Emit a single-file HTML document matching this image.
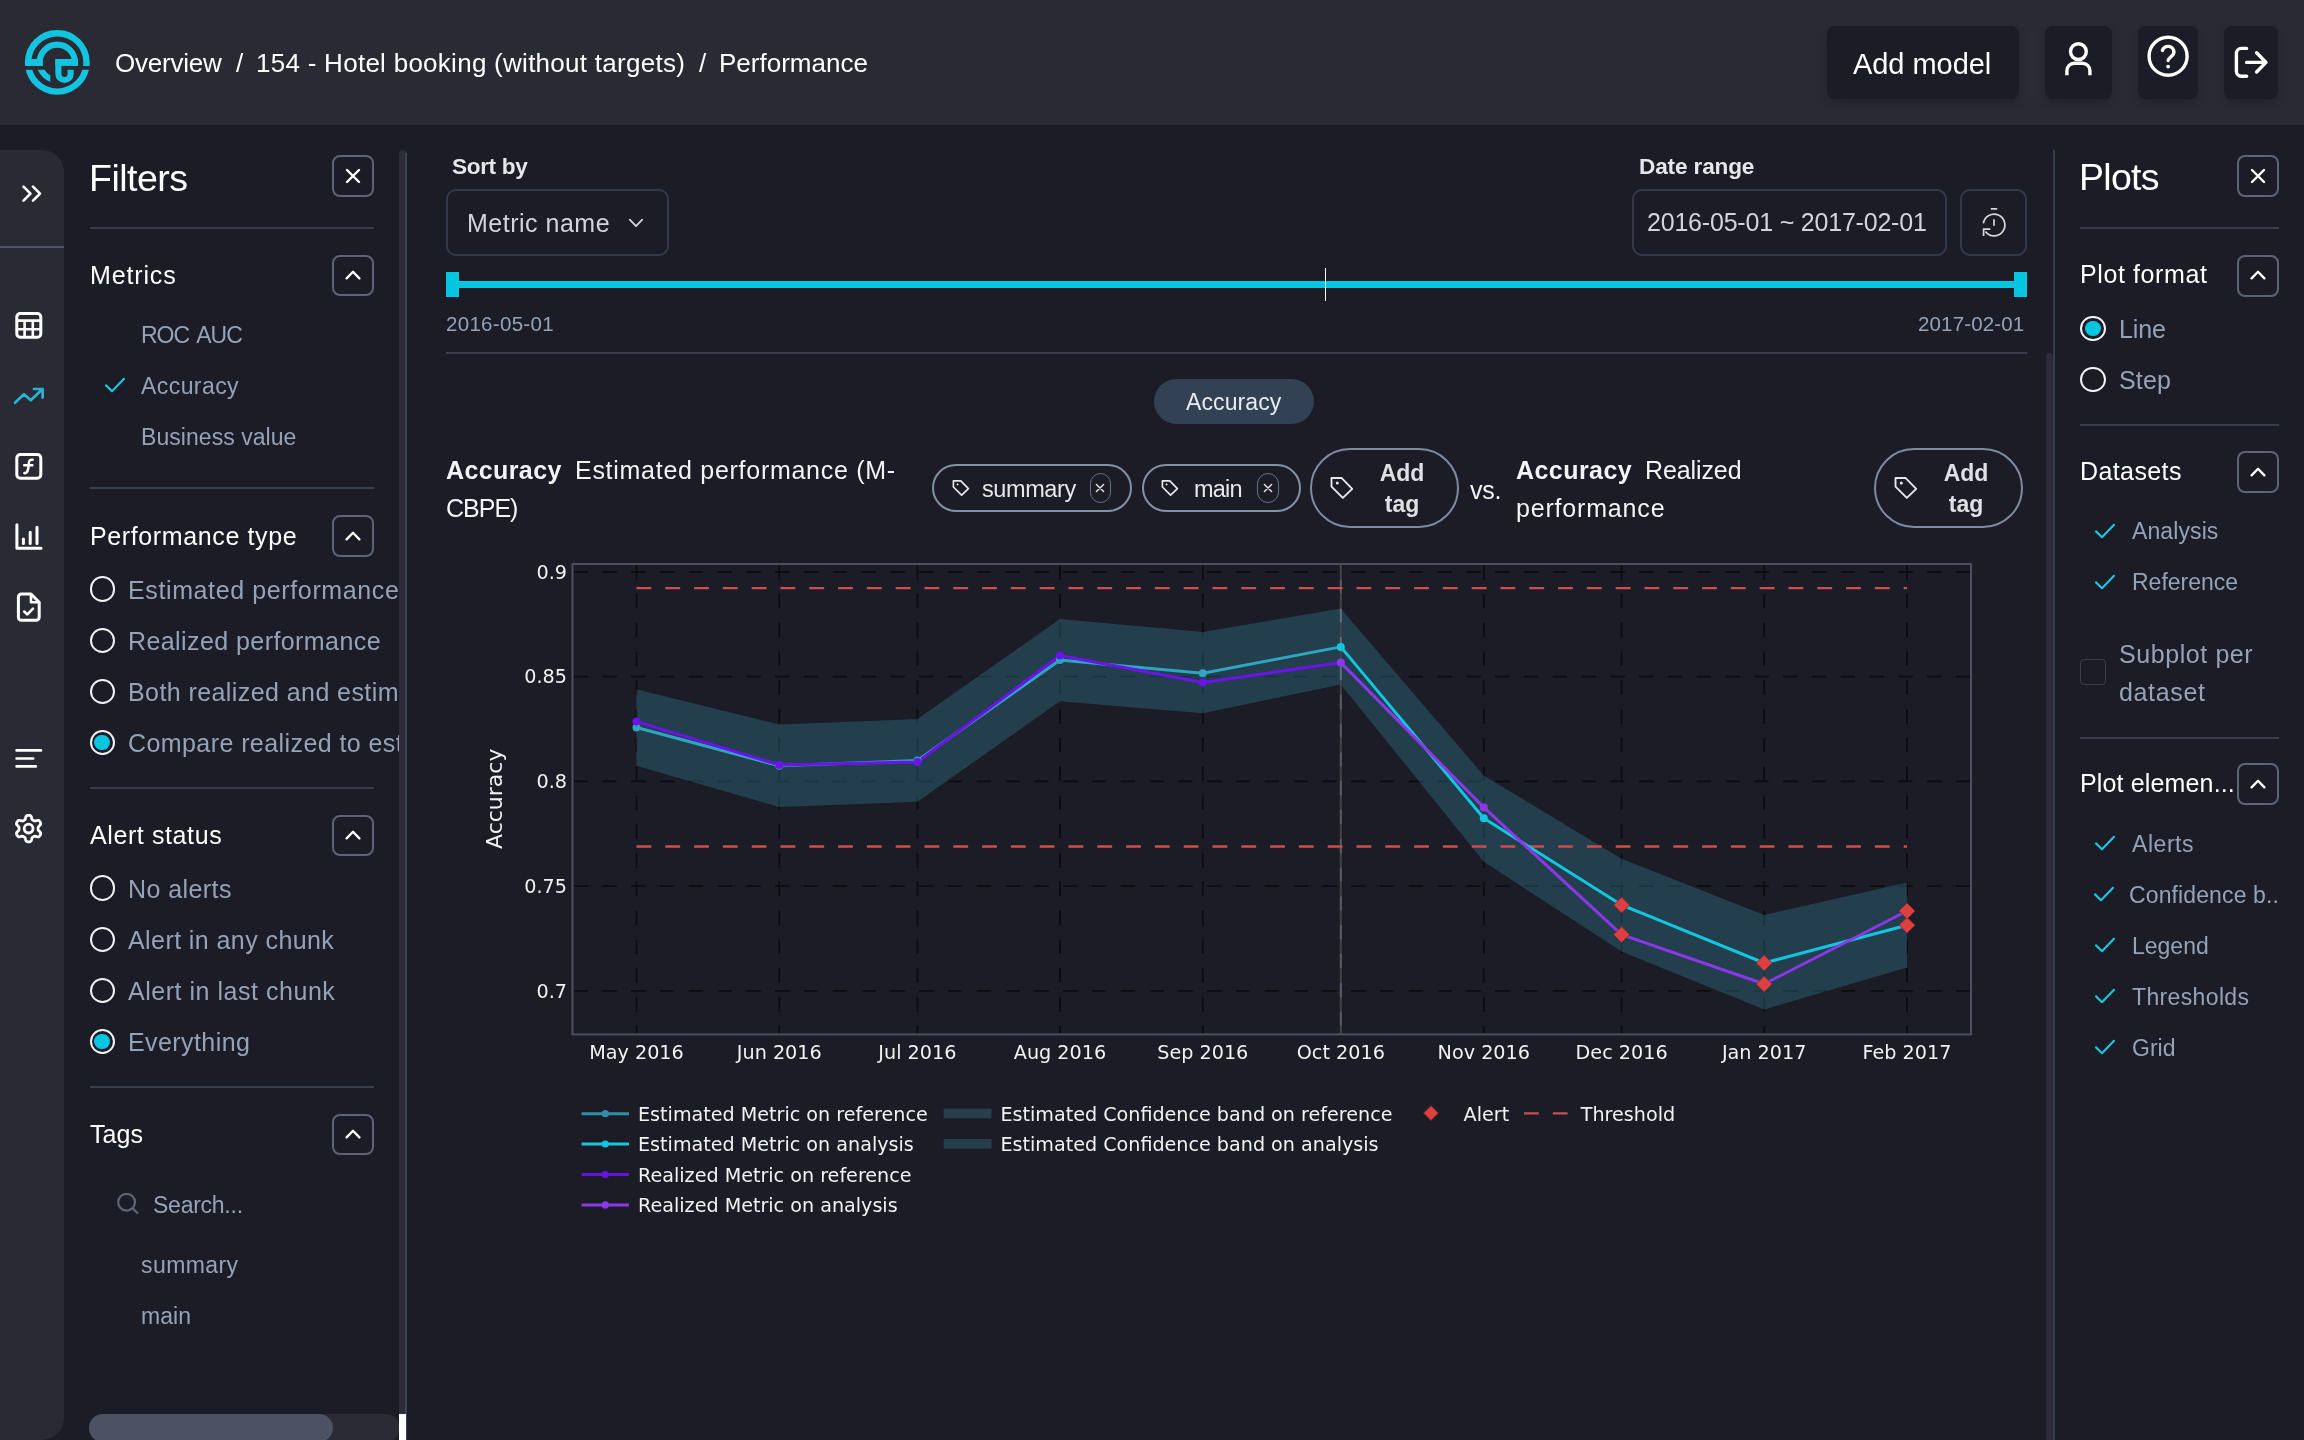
<!DOCTYPE html>
<html lang="en">
<head>
<meta charset="utf-8">
<title>Performance - 154 - Hotel booking (without targets)</title>
<style>
*{box-sizing:border-box;margin:0;padding:0}
html,body{width:2304px;height:1440px;overflow:hidden;background:#1c1c26}
body{position:relative;font-family:"Liberation Sans",Arial,sans-serif;color:#fff;-webkit-font-smoothing:antialiased}
.abs{position:absolute}
.t{position:absolute;white-space:nowrap;will-change:transform;line-height:40px;height:40px;margin-top:-20px}
svg{position:absolute;overflow:visible;will-change:transform}
.ico{fill:none;stroke:#fff;stroke-width:2;stroke-linecap:round;stroke-linejoin:round}
/* header */
#hdr{left:0;top:0;width:2304px;height:125px;background:#2a2a35}
.hbtn{position:absolute;top:26px;height:73px;background:#1c1c26;border-radius:8px;box-shadow:0 4px 8px rgba(0,0,0,.18)}
/* left nav */
#nav{left:0;top:150px;width:64px;height:1290px;background:#2a2a35;border-radius:0 22px 22px 0}
/* panels */
.sqb{position:absolute;width:41.8px;height:41.8px;border:2px solid #5b6577;border-radius:8px}
.hr{position:absolute;height:2px;background:#363f50}
.sec{font-size:25px;color:#fff;margin-top:-19.3px}
.it{font-size:23px;color:#94a3b8;margin-top:-18.7px}
.rl{font-size:25px;color:#94a3b8;letter-spacing:.42px;margin-top:-19.2px}
.radio{position:absolute;width:25.6px;height:25.6px;border:2px solid #f1f3f6;border-radius:50%}
.radio.on::after{content:"";position:absolute;left:2.9px;top:2.9px;width:15.8px;height:15.8px;border-radius:50%;background:#06c5e1}
.chk{stroke:#1fc3dc;stroke-width:2.2;fill:none;stroke-linecap:round;stroke-linejoin:round}
</style>
</head>
<body>

<!-- ================= HEADER ================= -->
<div id="hdr" class="abs">
  <svg style="left:17px;top:22px" width="80" height="80" viewBox="0 0 80 80">
    <defs>
      <clipPath id="lgU"><rect x="0" y="0" width="80" height="43.9"/></clipPath>
      <clipPath id="lgL"><rect x="0" y="47.8" width="80" height="40"/></clipPath>
      <clipPath id="lgS"><rect x="0" y="47.8" width="33.3" height="40"/></clipPath>
    </defs>
    <g fill="none" stroke="#12c4e0">
      <circle cx="40.3" cy="40.4" r="29.2" stroke-width="6.4" clip-path="url(#lgU)"/>
      <circle cx="40.3" cy="40.4" r="29.2" stroke-width="6.4" clip-path="url(#lgL)"/>
      <circle cx="40.3" cy="40.4" r="17.7" stroke-width="6.2" clip-path="url(#lgU)"/>
      <circle cx="40.3" cy="40.4" r="17.7" stroke-width="6.2" clip-path="url(#lgS)"/>
      <path d="M41.4 37 V51.9 A6.1 6.1 0 0 0 53.6 51.9 V47.8" stroke-width="6.1"/>
    </g>
    <rect x="8.6" y="37" width="17" height="6.9" fill="#12c4e0"/>
    <rect x="38.35" y="37" width="22.5" height="6.9" fill="#12c4e0"/>
  </svg>
  <div class="t" style="left:114.6px;top:63.4px;font-size:26px;letter-spacing:-0.22px" id="bc0">Overview</div>
  <div class="t" style="left:235.6px;top:63.4px;font-size:26px">/</div>
  <div class="t" style="left:256px;top:63.4px;font-size:26px;letter-spacing:0.27px" id="bc1">154 - Hotel booking (without targets)</div>
  <div class="t" style="left:699.4px;top:63.4px;font-size:26px">/</div>
  <div class="t" style="left:718.6px;top:63.4px;font-size:26px;letter-spacing:0.00px" id="bc2">Performance</div>

  <div class="hbtn" style="left:1827px;width:192px"></div>
  <div class="t" style="left:1853px;top:63.6px;font-size:29px;letter-spacing:-0.05px" id="tAddm">Add model</div>
  <div class="hbtn" style="left:2045px;width:67px"></div>
  <div class="hbtn" style="left:2138px;width:60px"></div>
  <div class="hbtn" style="left:2224px;width:54px"></div>
  <!-- user -->
  <svg class="ico" style="left:0;top:0;stroke-width:3.4" width="2304" height="125" viewBox="0 0 2304 125"><circle cx="2078.4" cy="51.6" r="7.9"/><path d="M2066.9 75.2V70.6A7.4 7.4 0 0 1 2074.3 63.2H2082.5A7.4 7.4 0 0 1 2089.9 70.6V75.2" stroke-linecap="butt"/><circle cx="2168.1" cy="56.2" r="19"/><path d="M2162.4 50.4A5.9 5.9 0 0 1 2173.9 52.2C2173.9 56.2 2168.1 57.6 2168.1 60.6"/><circle cx="2168.1" cy="66.6" r="1.2" fill="#fff" stroke-width="1.4"/><path d="M2246.6 48.4H2241.4A5 5 0 0 0 2236.4 53.4V71.2A5 5 0 0 0 2241.4 76.2H2246.6"/><path d="M2246.6 62.4H2265.4M2256.6 52.8 2266 62.4 2256.6 72"/></svg>
</div>

<!-- ================= LEFT NAV ================= -->
<div id="nav" class="abs"></div>
<div class="abs" style="left:0;top:246px;width:64px;height:2px;background:#4d5568"></div>


<svg class="ico" style="left:0;top:0;stroke-width:2.6" width="64" height="1440" viewBox="0 0 64 1440">
  <path d="M23.5 186.6 30.5 193.6 23.5 200.6M33 186.6 40 193.6 33 200.6"/>
  <!-- table -->
  <g stroke-width="3">
    <rect x="16.8" y="313.6" width="24" height="23.6" rx="3.5"/>
    <path d="M17 320.6H40.6M17 329.2H40.6M24.6 320.6V337M32.8 320.6V337" stroke-width="2.6"/>
  </g>
  <!-- trend -->
  <path d="M15 402.8 24 394.2 30.8 400.3 42.3 389.2M34 389H42.6V397.6" stroke="#2bb3d0" stroke-width="2.7"/>
  <!-- function -->
  <g stroke-width="3">
    <rect x="16.8" y="454.6" width="24" height="23.6" rx="3.5"/>
    <path d="M32.6 459.8C27.6 458.6 29.2 465.4 28.2 468.6 27.4 472 26.4 473.6 24.4 473M24.2 465.2H32.4" stroke-width="2.5"/>
  </g>
  <!-- bar chart -->
  <path d="M16.9 524.8V548.2H41M23.4 539V543.6M30.2 532.2V543.6M37 527.2V543.6" stroke-width="3"/>
  <!-- file check -->
  <g stroke-width="3">
    <path d="M31 594H21.4A3 3 0 0 0 18.4 597V617.2A3 3 0 0 0 21.4 620.2H36.2A3 3 0 0 0 39.2 617.2V602.2Z"/>
    <path d="M31 594.4V602.2H39" stroke-width="2.6"/>
    <path d="M24.2 611.6 27.4 614.4 33 608.6" stroke-width="2.6"/>
  </g>
  <!-- lines -->
  <path d="M16.6 750.4H41M16.6 758.5H33.2M16.6 766.4H35.8" stroke-width="2.7"/>
  <!-- gear -->
  <g stroke-width="2.8">
    <circle cx="28.6" cy="828.6" r="4.4"/>
    <path d="M38.1 828.6 38.1 829.0 38.1 829.4 38.2 829.9 38.4 830.3 38.9 830.9 39.6 831.6 40.3 832.3 40.7 833.0 40.7 833.6 40.6 834.2 40.4 834.7 40.1 835.2 39.8 835.7 39.4 836.2 39.0 836.6 38.4 836.9 37.6 836.9 36.7 836.7 35.7 836.4 35.0 836.2 34.5 836.3 34.1 836.4 33.7 836.6 33.4 836.8 33.0 837.0 32.6 837.3 32.3 837.5 32.0 838.0 31.8 838.6 31.6 839.6 31.3 840.6 30.8 841.2 30.3 841.6 29.8 841.8 29.2 841.9 28.6 841.9 28.0 841.9 27.4 841.8 26.9 841.6 26.4 841.2 25.9 840.6 25.6 839.6 25.4 838.6 25.2 838.0 24.9 837.5 24.6 837.3 24.2 837.0 23.9 836.8 23.5 836.6 23.1 836.4 22.7 836.3 22.2 836.2 21.5 836.4 20.5 836.7 19.6 836.9 18.8 836.9 18.2 836.6 17.8 836.2 17.4 835.7 17.1 835.2 16.8 834.7 16.6 834.2 16.5 833.6 16.5 833.0 16.9 832.3 17.6 831.6 18.3 830.9 18.8 830.3 19.0 829.9 19.1 829.4 19.1 829.0 19.1 828.6 19.1 828.2 19.1 827.8 19.0 827.3 18.8 826.9 18.3 826.3 17.6 825.6 16.9 824.9 16.5 824.2 16.5 823.6 16.6 823.0 16.8 822.5 17.1 822.0 17.4 821.5 17.8 821.0 18.2 820.6 18.8 820.3 19.6 820.3 20.5 820.5 21.5 820.8 22.2 821.0 22.7 820.9 23.1 820.8 23.5 820.6 23.8 820.4 24.2 820.2 24.6 819.9 24.9 819.7 25.2 819.2 25.4 818.6 25.6 817.6 25.9 816.6 26.4 816.0 26.9 815.6 27.4 815.4 28.0 815.3 28.6 815.3 29.2 815.3 29.8 815.4 30.3 815.6 30.8 816.0 31.3 816.6 31.6 817.6 31.8 818.6 32.0 819.2 32.3 819.7 32.6 819.9 33.0 820.2 33.3 820.4 33.7 820.6 34.1 820.8 34.5 820.9 35.0 821.0 35.7 820.8 36.7 820.5 37.6 820.3 38.4 820.3 39.0 820.6 39.4 821.0 39.8 821.5 40.1 822.0 40.4 822.5 40.6 823.0 40.7 823.6 40.7 824.2 40.3 824.9 39.6 825.6 38.9 826.3 38.4 826.9 38.2 827.3 38.1 827.8 38.1 828.2Z"/>
  </g>
</svg>


<!-- ================= FILTERS PANEL ================= -->
<div class="abs" style="left:64px;top:150px;width:335px;height:1290px;overflow:hidden" id="fpan">
<div class="abs" style="left:-64px;top:-150px;width:600px;height:1440px">
<div class="t" style="left:89px;top:178px;font-size:37.5px;line-height:50px;height:50px;margin-top:-25px;letter-spacing:-0.50px" id="tFilters">Filters</div>
<div class="sqb" style="left:332.1px;top:155.2px"></div><svg class="ico" style="left:352.8px;top:175.5px" width="1" height="1"><path d="M-6 -6 6 6M6 -6-6 6" stroke-width="2.4"/></svg>

<div class="hr" style="left:90px;top:227px;width:284px"></div>
<div class="t sec" style="left:90px;top:274px;letter-spacing:0.85px" id="tMetrics">Metrics</div>
<div class="sqb" style="left:332.1px;top:254.7px"></div><svg class="ico" style="left:352.8px;top:275.3px" width="1" height="1"><path d="M-6.4 3.4 0 -3.2 6.4 3.4" stroke-width="2.3"/></svg>

<div class="t it" style="left:141px;top:334px;word-spacing:3px;letter-spacing:-1.00px" id="m0">ROC AUC</div>
<div class="t it" style="left:141px;top:385px;letter-spacing:0.43px" id="m1">Accuracy</div>
<svg style="left:115px;top:385px" width="1" height="1"><path class="chk" d="M-9 0.4 -3 6.2 9 -6.2"/></svg>

<div class="t it" style="left:141px;top:436px;letter-spacing:0.05px" id="m2">Business value</div>
<div class="hr" style="left:90px;top:487px;width:284px"></div>
<div class="t sec" style="left:90px;top:535px;letter-spacing:0.62px" id="tPerf">Performance type</div>
<div class="sqb" style="left:332.1px;top:515.4px"></div><svg class="ico" style="left:352.8px;top:536.0px" width="1" height="1"><path d="M-6.4 3.4 0 -3.2 6.4 3.4" stroke-width="2.3"/></svg>

<div class="radio" style="left:89.6px;top:576.4px"></div>

<div class="t rl" style="left:128px;top:589.0px;letter-spacing:0.62px" id="p0">Estimated performance</div>
<div class="radio" style="left:89.6px;top:627.5px"></div>

<div class="t rl" style="left:128px;top:640.1px" id="p1">Realized performance</div>
<div class="radio" style="left:89.6px;top:678.6px"></div>

<div class="t rl" style="left:128px;top:691.2px" id="p2">Both realized and estimated</div>
<div class="radio on" style="left:89.6px;top:729.7px"></div>

<div class="t rl" style="left:128px;top:742.3px" id="p3">Compare realized to estimated</div>
<div class="hr" style="left:90px;top:787px;width:284px"></div>
<div class="t sec" style="left:90px;top:834px;letter-spacing:0.60px" id="tAlert">Alert status</div>
<div class="sqb" style="left:332.1px;top:814.7px"></div><svg class="ico" style="left:352.8px;top:835.3px" width="1" height="1"><path d="M-6.4 3.4 0 -3.2 6.4 3.4" stroke-width="2.3"/></svg>

<div class="radio" style="left:89.6px;top:875.4px"></div>

<div class="t rl" style="left:128px;top:888.0px" id="a0">No alerts</div>
<div class="radio" style="left:89.6px;top:926.5px"></div>

<div class="t rl" style="left:128px;top:939.1px" id="a1">Alert in any chunk</div>
<div class="radio" style="left:89.6px;top:977.6px"></div>

<div class="t rl" style="left:128px;top:990.2px;letter-spacing:0.53px" id="a2">Alert in last chunk</div>
<div class="radio on" style="left:89.6px;top:1028.7px"></div>

<div class="t rl" style="left:128px;top:1041.3px" id="a3">Everything</div>
<div class="hr" style="left:90px;top:1086px;width:284px"></div>
<div class="t sec" style="left:90px;top:1133px;letter-spacing:0.05px" id="tTags">Tags</div>
<div class="sqb" style="left:332.1px;top:1113.7px"></div><svg class="ico" style="left:352.8px;top:1134.3px" width="1" height="1"><path d="M-6.4 3.4 0 -3.2 6.4 3.4" stroke-width="2.3"/></svg>

<svg style="left:116px;top:1192px" width="24" height="24" viewBox="0 0 24 24" fill="none" stroke="#5b6575" stroke-width="2.2" stroke-linecap="round"><circle cx="10.6" cy="10.2" r="8.4"/><path d="M17 16.6 21.4 21"/></svg>
<div class="t it" style="left:153px;top:1204px;font-size:23px;letter-spacing:-0.25px" id="tSearch">Search...</div>
<div class="t it" style="left:141px;top:1264px;letter-spacing:0.42px" id="g0">summary</div>
<div class="t it" style="left:141px;top:1315px;letter-spacing:0.08px" id="g1">main</div>
<div class="abs" style="left:89px;top:1414px;width:311px;height:28px;border-radius:14px;background:#2a2b35"></div>
<div class="abs" style="left:89px;top:1414px;width:244px;height:28px;border-radius:14px;background:#4b5263"></div>
</div></div>
<div class="abs" style="left:399px;top:150px;width:7.5px;height:1290px;background:#2b2c36;border-radius:4px 4px 0 0"></div>
<div class="abs" style="left:405.4px;top:153px;width:1.2px;height:1290px;background:#394354"></div>
<div class="abs" style="left:399px;top:1414px;width:7px;height:26px;background:#fff"></div>

<!-- ================= MAIN ================= -->
<div class="t" style="left:452.4px;top:167.4px;font-size:22.6px;font-weight:bold;color:#e5e7eb;letter-spacing:-0.35px" id="tSort">Sort by</div>
<div class="abs" style="left:446px;top:189px;width:223px;height:67px;border:2px solid #313a4a;border-radius:10px"></div>
<div class="t" style="left:467px;top:223px;font-size:25px;color:#d1d5db;letter-spacing:0.50px" id="tMname">Metric name</div>
<svg style="left:635.6px;top:222.6px" width="1" height="1"><path d="M-6.2 -3.4 0 3.2 6.2 -3.4" fill="none" stroke="#d1d5db" stroke-width="1.8" stroke-linecap="round" stroke-linejoin="round"/></svg>
<div class="t" style="left:1638.6px;top:167.4px;font-size:22.6px;font-weight:bold;color:#e5e7eb;letter-spacing:-0.15px" id="tDate">Date range</div>
<div class="abs" style="left:1632px;top:189px;width:315px;height:67px;border:2px solid #313a4a;border-radius:10px"></div>
<div class="t" style="left:1647px;top:222.4px;font-size:25px;color:#d1d5db;letter-spacing:-0.20px" id="tRange">2016-05-01 ~ 2017-02-01</div>
<div class="abs" style="left:1960px;top:189px;width:67px;height:67px;border:2px solid #313a4a;border-radius:10px"></div>
<svg style="left:1993.5px;top:225.1px" width="1" height="1"><g fill="none" stroke="#d6d6d6" stroke-width="1.7"><path d="M-10.6 -1.6A10.8 10.8 0 1 1 -8.6 6.4"/><path d="M-3.6 4.2H-10.4V11"/><path d="M0 -5.8V0.8M-3.2 -16.1H3.2"/></g></svg>
<div class="abs" style="left:446px;top:281px;width:1581px;height:7.4px;background:#06c5e1"></div>
<div class="abs" style="left:446px;top:272px;width:12.6px;height:25.4px;background:#06c5e1"></div>
<div class="abs" style="left:2014px;top:272px;width:13px;height:25.4px;background:#06c5e1"></div>
<div class="abs" style="left:1324.7px;top:268px;width:1.8px;height:33px;background:#fff"></div>
<div class="t" style="left:446px;top:323.8px;font-size:20.5px;color:#94a3b8;letter-spacing:0.30px" id="tD1">2016-05-01</div>
<div class="t" style="left:1918px;top:323.8px;font-size:20.5px;color:#94a3b8;letter-spacing:0.15px" id="tD2">2017-02-01</div>
<div class="hr" style="left:446px;top:352px;width:1581px"></div>
<div class="abs" style="left:1154px;top:379px;width:159.5px;height:45px;border-radius:23px;background:#334155"></div>
<div class="t" style="left:1186px;top:402.4px;font-size:23px;color:#e8ecf1;letter-spacing:0.10px" id="tPill">Accuracy</div>
<div class="t" style="left:446px;top:469.8px;font-size:25px;font-weight:bold;color:#f3f4f6;letter-spacing:0.40px" id="tAcc1">Accuracy</div>
<div class="t" style="left:575px;top:469.8px;font-size:25px;color:#f3f4f6;letter-spacing:0.72px" id="tEst">Estimated performance (M-</div>
<div class="t" style="left:446px;top:508.4px;font-size:25px;color:#f3f4f6;letter-spacing:-1.00px" id="tCbpe">CBPE)</div>
<div class="abs" style="left:932.0px;top:464px;width:200.0px;height:48px;border:2px solid #8391a8;border-radius:24px"></div>
<svg style="left:960.5px;top:488.0px" width="1" height="1"><g transform="scale(1.00)" fill="none" stroke="#e5e7eb" stroke-width="1.70" stroke-linejoin="round"><path d="M-7.6 -7.2H-0.2L7.4 0.6 0.6 7.2-7.6-1Z"/><circle cx="-3.4" cy="-3.6" r=".6" fill="#e5e7eb" stroke-width="1"/></g></svg>
<div class="t" style="left:982.0px;top:489px;font-size:23.5px;color:#e5e7eb;letter-spacing:-0.40px" id="tSum">summary</div>
<div class="abs" style="left:1089.5px;top:473.4px;width:21.6px;height:29.4px;border:1.6px solid #657085;border-radius:11px"></div>
<svg style="left:1100.3px;top:488.2px" width="1" height="1"><path d="M-3.6 -3.6 3.6 3.6M3.6 -3.6-3.6 3.6" stroke="#e5e7eb" stroke-width="1.4" fill="none" stroke-linecap="round"/></svg>
<div class="abs" style="left:1141.7px;top:464px;width:159.0px;height:48px;border:2px solid #8391a8;border-radius:24px"></div>
<svg style="left:1170.2px;top:488.0px" width="1" height="1"><g transform="scale(1.00)" fill="none" stroke="#e5e7eb" stroke-width="1.70" stroke-linejoin="round"><path d="M-7.6 -7.2H-0.2L7.4 0.6 0.6 7.2-7.6-1Z"/><circle cx="-3.4" cy="-3.6" r=".6" fill="#e5e7eb" stroke-width="1"/></g></svg>
<div class="t" style="left:1194.0px;top:489px;font-size:23.5px;color:#e5e7eb;letter-spacing:-0.80px" id="tMain">main</div>
<div class="abs" style="left:1257.2px;top:473.4px;width:21.6px;height:29.4px;border:1.6px solid #657085;border-radius:11px"></div>
<svg style="left:1268.0px;top:488.2px" width="1" height="1"><path d="M-3.6 -3.6 3.6 3.6M3.6 -3.6-3.6 3.6" stroke="#e5e7eb" stroke-width="1.4" fill="none" stroke-linecap="round"/></svg>
<div class="abs" style="left:1310.0px;top:448px;width:149px;height:79.6px;border:2px solid #7d8aa1;border-radius:40px"></div>
<svg style="left:1342.0px;top:487.6px" width="1" height="1"><g transform="scale(1.38)" fill="none" stroke="#e5e7eb" stroke-width="1.38" stroke-linejoin="round"><path d="M-7.6 -7.2H-0.2L7.4 0.6 0.6 7.2-7.6-1Z"/><circle cx="-3.4" cy="-3.6" r=".6" fill="#e5e7eb" stroke-width="1"/></g></svg>
<div class="t" style="left:1362.0px;top:472.6px;font-size:23px;font-weight:bold;color:#dde1e6;width:80px;text-align:center" id="tAdd1">Add</div>
<div class="t" style="left:1362.0px;top:504px;font-size:23px;font-weight:bold;color:#dde1e6;width:80px;text-align:center" id="tTag1">tag</div>
<div class="t" style="left:1470px;top:489.6px;font-size:25px;color:#f3f4f6;letter-spacing:-0.30px" id="tVs">vs.</div>
<div class="t" style="left:1516px;top:469.8px;font-size:25px;font-weight:bold;color:#f3f4f6;letter-spacing:0.45px" id="tAcc2">Accuracy</div>
<div class="t" style="left:1645px;top:469.8px;font-size:25px;color:#f3f4f6;letter-spacing:-0.10px" id="tReal">Realized</div>
<div class="t" style="left:1516px;top:508.4px;font-size:25px;color:#f3f4f6;letter-spacing:0.82px" id="tPerfm">performance</div>
<div class="abs" style="left:1873.6px;top:448px;width:149px;height:79.6px;border:2px solid #7d8aa1;border-radius:40px"></div>
<svg style="left:1905.6px;top:487.6px" width="1" height="1"><g transform="scale(1.38)" fill="none" stroke="#e5e7eb" stroke-width="1.38" stroke-linejoin="round"><path d="M-7.6 -7.2H-0.2L7.4 0.6 0.6 7.2-7.6-1Z"/><circle cx="-3.4" cy="-3.6" r=".6" fill="#e5e7eb" stroke-width="1"/></g></svg>
<div class="t" style="left:1925.6px;top:472.6px;font-size:23px;font-weight:bold;color:#dde1e6;width:80px;text-align:center" id="tAdd2">Add</div>
<div class="t" style="left:1925.6px;top:504px;font-size:23px;font-weight:bold;color:#dde1e6;width:80px;text-align:center" id="tTag2">tag</div>
<div class="abs" style="left:2046px;top:353px;width:7.4px;height:1100px;border-radius:4px;background:#2b2c37"></div>
<div class="abs" style="left:2053px;top:150px;width:2px;height:1290px;background:#343d4e"></div>

<!-- ================= CHART ================= -->
<svg style="left:0;top:0" width="2304" height="1440" viewBox="0 0 2304 1440" font-family="'DejaVu Sans',Verdana,sans-serif">
<g stroke="#0b0b10" stroke-width="1.8" stroke-dasharray="14.4 14.4" fill="none">
<path d="M573.5 571.9H1970.0"/>
<path d="M573.5 676.6H1970.0"/>
<path d="M573.5 781.4H1970.0"/>
<path d="M573.5 886.1H1970.0"/>
<path d="M573.5 990.9H1970.0"/>
<path d="M636.5 565.0V1033.4"/>
<path d="M779.3 565.0V1033.4"/>
<path d="M917.4 565.0V1033.4"/>
<path d="M1060.0 565.0V1033.4"/>
<path d="M1202.8 565.0V1033.4"/>
<path d="M1340.8 565.0V1033.4"/>
<path d="M1483.8 565.0V1033.4"/>
<path d="M1621.6 565.0V1033.4"/>
<path d="M1764.2 565.0V1033.4"/>
<path d="M1907.0 565.0V1033.4"/>
</g>
<polygon points="636.5,689.3 779.3,724.5 917.4,719.0 1060.0,619.0 1202.8,632.0 1340.8,608.6 1340.8,684.4 1202.8,713.3 1060.0,701.3 917.4,801.8 779.3,807.0 636.5,765.8" fill="#2a6073" fill-opacity=".5"/>
<polygon points="1340.8,608.6 1483.8,775.5 1621.6,858.8 1764.2,915.0 1907.0,882.5 1907.0,967.6 1764.2,1009.6 1621.6,951.5 1483.8,861.8 1340.8,684.4" fill="#2a6073" fill-opacity=".5"/>
<path d="M1340.8 565.0V1033.4" stroke="#464646" stroke-width="2" stroke-dasharray="14.4 14.4" fill="none"/>
<path d="M1340.8 565.0V1033.4" stroke="#c4c8cc" stroke-opacity=".38" stroke-width="2" stroke-dasharray="14.4 14.4" stroke-dashoffset="14.4" fill="none"/>
<g stroke="#c95050" stroke-width="2.3" stroke-dasharray="14.8 14" fill="none"><path d="M636.5 588.2H1907.0"/><path d="M636.5 846.5H1907.0"/></g>
<g fill="none" stroke-width="3" stroke-linejoin="round">
<polyline points="636.5,727.5 779.3,765.8 917.4,760.5 1060.0,660.0 1202.8,673.2 1340.8,646.9" stroke="#2fa5c0"/>
<polyline points="1340.8,646.9 1483.8,818.3 1621.6,905.0 1764.2,963.0 1907.0,925.2" stroke="#12c6e0"/>
<polyline points="636.5,721.5 779.3,765.0 917.4,762.0 1060.0,655.5 1202.8,682.5 1340.8,662.6" stroke="#6a14ea"/>
<polyline points="1340.8,662.6 1483.8,807.4 1621.6,934.6 1764.2,984.0 1907.0,911.0" stroke="#8b38e8"/>
</g>
<circle cx="636.5" cy="727.5" r="4" fill="#2fa5c0"/>
<circle cx="636.5" cy="721.5" r="4" fill="#6a14ea"/>
<circle cx="779.3" cy="765.8" r="4" fill="#2fa5c0"/>
<circle cx="779.3" cy="765.0" r="4" fill="#6a14ea"/>
<circle cx="917.4" cy="760.5" r="4" fill="#2fa5c0"/>
<circle cx="917.4" cy="762.0" r="4" fill="#6a14ea"/>
<circle cx="1060.0" cy="660.0" r="4" fill="#2fa5c0"/>
<circle cx="1060.0" cy="655.5" r="4" fill="#6a14ea"/>
<circle cx="1202.8" cy="673.2" r="4" fill="#2fa5c0"/>
<circle cx="1202.8" cy="682.5" r="4" fill="#6a14ea"/>
<circle cx="1340.8" cy="646.9" r="4" fill="#12c6e0"/>
<circle cx="1340.8" cy="662.6" r="4" fill="#8b38e8"/>
<circle cx="1483.8" cy="818.3" r="4" fill="#12c6e0"/>
<circle cx="1483.8" cy="807.4" r="4" fill="#8b38e8"/>
<path d="M1621.6 897.0L1629.6 905.0L1621.6 913.0L1613.6 905.0Z" fill="#dd4040" stroke="#7c2a2f" stroke-width=".8"/>
<path d="M1621.6 926.6L1629.6 934.6L1621.6 942.6L1613.6 934.6Z" fill="#dd4040" stroke="#7c2a2f" stroke-width=".8"/>
<path d="M1764.2 955.0L1772.2 963.0L1764.2 971.0L1756.2 963.0Z" fill="#dd4040" stroke="#7c2a2f" stroke-width=".8"/>
<path d="M1764.2 976.0L1772.2 984.0L1764.2 992.0L1756.2 984.0Z" fill="#dd4040" stroke="#7c2a2f" stroke-width=".8"/>
<path d="M1907.0 917.2L1915.0 925.2L1907.0 933.2L1899.0 925.2Z" fill="#dd4040" stroke="#7c2a2f" stroke-width=".8"/>
<path d="M1907.0 903.0L1915.0 911.0L1907.0 919.0L1899.0 911.0Z" fill="#dd4040" stroke="#7c2a2f" stroke-width=".8"/>
<rect x="572.5" y="564.0" width="1398.5" height="470.4" fill="none" stroke="#4a4f61" stroke-width="2"/>
<g fill="#f2f2f2" font-size="19.2px">
<text x="636.5" y="1058.6" text-anchor="middle">May 2016</text>
<text x="779.3" y="1058.6" text-anchor="middle">Jun 2016</text>
<text x="917.4" y="1058.6" text-anchor="middle">Jul 2016</text>
<text x="1060.0" y="1058.6" text-anchor="middle">Aug 2016</text>
<text x="1202.8" y="1058.6" text-anchor="middle">Sep 2016</text>
<text x="1340.8" y="1058.6" text-anchor="middle">Oct 2016</text>
<text x="1483.8" y="1058.6" text-anchor="middle">Nov 2016</text>
<text x="1621.6" y="1058.6" text-anchor="middle">Dec 2016</text>
<text x="1764.2" y="1058.6" text-anchor="middle">Jan 2017</text>
<text x="1907.0" y="1058.6" text-anchor="middle">Feb 2017</text>
<text x="567" y="578.7" text-anchor="end">0.9</text>
<text x="567" y="683.4" text-anchor="end">0.85</text>
<text x="567" y="788.2" text-anchor="end">0.8</text>
<text x="567" y="892.9" text-anchor="end">0.75</text>
<text x="567" y="997.7" text-anchor="end">0.7</text>
</g>
<text transform="translate(501.6 798.8) rotate(-90)" text-anchor="middle" font-size="22px" fill="#f2f2f2">Accuracy</text>
<g font-size="19.15px" fill="#f2f2f2">
<path d="M581.6 1113.7H629" stroke="#2e8fa8" stroke-width="3" fill="none"/><circle cx="605.3" cy="1113.7" r="3.6" fill="#2e8fa8"/>
<text x="638" y="1120.7">Estimated Metric on reference</text>
<path d="M581.6 1144.0H629" stroke="#12c6e0" stroke-width="3" fill="none"/><circle cx="605.3" cy="1144.0" r="3.6" fill="#12c6e0"/>
<text x="638" y="1151.0">Estimated Metric on analysis</text>
<path d="M581.6 1174.6H629" stroke="#6414e0" stroke-width="3" fill="none"/><circle cx="605.3" cy="1174.6" r="3.6" fill="#6414e0"/>
<text x="638" y="1181.6">Realized Metric on reference</text>
<path d="M581.6 1204.9H629" stroke="#8b38e8" stroke-width="3" fill="none"/><circle cx="605.3" cy="1204.9" r="3.6" fill="#8b38e8"/>
<text x="638" y="1211.9">Realized Metric on analysis</text>
<rect x="943.7" y="1108.7" width="47.8" height="9.6" fill="#273f4d"/>
<text x="1000.4" y="1120.7">Estimated Confidence band on reference</text>
<rect x="943.7" y="1139.0" width="47.8" height="9.6" fill="#273f4d"/>
<text x="1000.4" y="1151.0">Estimated Confidence band on analysis</text>
<path d="M1431.0 1105.7L1438.4 1113.1L1431.0 1120.5L1423.6 1113.1Z" fill="#dd4040" stroke="#7c2a2f" stroke-width=".8"/>
<text x="1463.6" y="1120.7">Alert</text>
<path d="M1524 1113.3H1568.8" stroke="#c95050" stroke-width="2.2" stroke-dasharray="14.8 14" fill="none"/>
<text x="1580.8" y="1120.7">Threshold</text>
</g>
</svg>

<!-- ================= RIGHT PANEL ================= -->
<div class="abs" style="left:2054px;top:150px;width:224.6px;height:1290px;overflow:hidden"><div class="abs" style="left:-2054px;top:-150px;width:2400px;height:1440px">
<div class="t" style="left:2079px;top:177.4px;font-size:37.5px;line-height:50px;height:50px;margin-top:-25px;letter-spacing:-0.70px" id="tPlots">Plots</div>
<div class="sqb" style="left:2237.0px;top:155.4px"></div><svg class="ico" style="left:2257.7px;top:175.7px" width="1" height="1"><path d="M-6 -6 6 6M6 -6-6 6" stroke-width="2.4"/></svg>

<div class="hr" style="left:2080px;top:227px;width:199px"></div>
<div class="t sec" style="left:2080px;top:273.3px;letter-spacing:0.60px" id="tPf">Plot format</div>
<div class="sqb" style="left:2237.0px;top:254.8px"></div><svg class="ico" style="left:2257.7px;top:275.4px" width="1" height="1"><path d="M-6.4 3.4 0 -3.2 6.4 3.4" stroke-width="2.3"/></svg>

<div class="radio on" style="left:2080.0px;top:315.7px"></div>

<div class="t rl" style="left:2119px;top:327.8px;letter-spacing:-0.10px" id="r0">Line</div>
<div class="radio" style="left:2080.0px;top:366.8px"></div>

<div class="t rl" style="left:2119px;top:379px;letter-spacing:0.15px" id="r1">Step</div>
<div class="hr" style="left:2080px;top:423.6px;width:199px"></div>
<div class="t sec" style="left:2080px;top:470.2px;letter-spacing:0.40px" id="tDs">Datasets</div>
<div class="sqb" style="left:2237.0px;top:451.4px"></div><svg class="ico" style="left:2257.7px;top:472.0px" width="1" height="1"><path d="M-6.4 3.4 0 -3.2 6.4 3.4" stroke-width="2.3"/></svg>

<svg style="left:2105px;top:531px" width="1" height="1"><path class="chk" d="M-9 0.4 -3 6.2 9 -6.2"/></svg>

<div class="t it" style="left:2132px;top:530.1px;letter-spacing:0.10px" id="d0">Analysis</div>
<svg style="left:2105px;top:582px" width="1" height="1"><path class="chk" d="M-9 0.4 -3 6.2 9 -6.2"/></svg>

<div class="t it" style="left:2132px;top:581.1px" id="d1">Reference</div>
<div class="abs" style="left:2080px;top:659px;width:25.6px;height:25.6px;border:1.6px solid #343d4e;border-radius:4px"></div>
<div class="t rl" style="left:2119px;top:652.8px;letter-spacing:0.58px" id="s0">Subplot per</div>
<div class="t rl" style="left:2119px;top:691.2px;letter-spacing:0.65px" id="s1">dataset</div>
<div class="hr" style="left:2080px;top:736.6px;width:199px"></div>
<div class="t sec" style="left:2080px;top:782.7px;letter-spacing:0.15px" id="tPe">Plot elemen...</div>
<div class="abs" style="left:2237px;top:763px;width:42px;height:42px;background:#1c1c26"></div>
<div class="sqb" style="left:2237.0px;top:763.2px"></div><svg class="ico" style="left:2257.7px;top:783.8px" width="1" height="1"><path d="M-6.4 3.4 0 -3.2 6.4 3.4" stroke-width="2.3"/></svg>

<svg style="left:2105px;top:843px" width="1" height="1"><path class="chk" d="M-9 0.4 -3 6.2 9 -6.2"/></svg>

<div class="t it" style="left:2132px;top:842.2px;letter-spacing:0.55px" id="e0">Alerts</div>
<svg style="left:2104px;top:894px" width="1" height="1"><path class="chk" d="M-9 0.4 -3 6.2 9 -6.2"/></svg>

<div class="t it" style="left:2129px;top:893.3px;letter-spacing:0.12px" id="e1">Confidence b..</div>
<svg style="left:2105px;top:945px" width="1" height="1"><path class="chk" d="M-9 0.4 -3 6.2 9 -6.2"/></svg>

<div class="t it" style="left:2132px;top:944.4px" id="e2">Legend</div>
<svg style="left:2105px;top:996px" width="1" height="1"><path class="chk" d="M-9 0.4 -3 6.2 9 -6.2"/></svg>

<div class="t it" style="left:2132px;top:995.5px;letter-spacing:0.36px" id="e3">Thresholds</div>
<svg style="left:2105px;top:1047px" width="1" height="1"><path class="chk" d="M-9 0.4 -3 6.2 9 -6.2"/></svg>

<div class="t it" style="left:2132px;top:1046.6px" id="e4">Grid</div>
</div></div>

</body>
</html>
